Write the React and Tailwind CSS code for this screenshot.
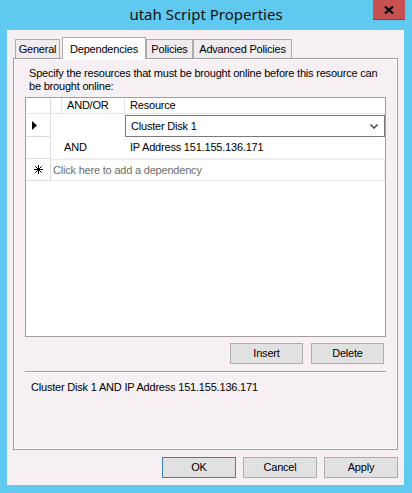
import React from "react";

const Btn = ({ label, primary }) => (
  <div
    className={
      "w-[74px] h-[21px] flex items-center justify-center bg-[#e1e1e1] border " +
      (primary ? "border-[#3c7fb1]" : "border-[#adadad]")
    }
  >
    {label}
  </div>
);

const Tab = ({ label, w, active }) => (
  <div
    className={
      active
        ? "h-[22px] -mb-px bg-white border border-b-0 border-[#acacac] flex items-start pt-[3px] justify-center"
        : "h-[19px] bg-[#f0ebef] border border-b-0 border-[#acacac] flex items-center justify-center"
    }
    style={{ width: w }}
  >
    {label}
  </div>
);

export default function App() {
  return (
    <div className="w-[412px] h-[493px] bg-[#5fc9ef] flex flex-col font-['Liberation_Sans',Arial,sans-serif] text-[11px] tracking-[-0.2px] text-black">
      {/* title bar */}
      <div className="h-[30px] relative flex items-center justify-center tracking-normal">
        <span className="font-['Noto_Sans',sans-serif] text-[15px] text-[#111] -mt-[2px]">
          utah Script Properties
        </span>
        <div className="absolute left-[373px] top-0 w-[32px] h-[20px] bg-[#c75050] border-b border-[#8a3a3a] flex items-center justify-center">
          <svg width="10" height="8" viewBox="0 0 10 8">
            <path d="M1 0.5 L9 7.5 M9 0.5 L1 7.5" stroke="#000" strokeWidth="2.2" />
          </svg>
        </div>
      </div>

      {/* client */}
      <div className="ml-[7px] mr-[8px] mb-[8px] flex-1 bg-[#f6f0f4] px-[6px] pt-[7px] flex flex-col">
        <div className="flex items-end h-[21px] pl-[2px] relative z-10">
          <Tab label="General" w={45} />
          <div className="w-[2px]" />
          <Tab label="Dependencies" w={84} active />
          <Tab label="Policies" w={47} />
          <Tab label="Advanced Policies" w={99} />
        </div>

        <div className="h-[392px] border border-[#a0a0a0] bg-[#f6f0f4] shadow-[inset_1px_1px_0_#fff,inset_-1px_-1px_0_#fff] pt-[8px] px-[11px] flex flex-col">
          <p className="pl-[4px] leading-[13px] whitespace-nowrap">
            Specify the resources that must be brought online before this resource can
            <br />
            be brought online:
          </p>

          <div className="mt-[4px] h-[240px] border border-[#a0a0a0] bg-white flex flex-col">
            {/* header */}
            <div className="flex h-[16px] border-b border-[#e3e3e3]">
              <div className="w-[25px] border-r border-[#d8d8d8]" />
              <div className="w-[11px] border-r border-[#e3e3e3]" />
              <div className="w-[63px] border-r border-[#e3e3e3] pl-[5px] flex items-center">AND/OR</div>
              <div className="flex-1 pl-[5px] flex items-center">Resource</div>
            </div>
            {/* row 1 */}
            <div className="flex h-[23px]">
              <div className="w-[25px] border-r border-b border-[#dcdcdc] flex items-center pl-[6px]">
                <svg width="5" height="9" viewBox="0 0 5 9">
                  <path d="M0 0 L5 4.5 L0 9 Z" fill="#000" />
                </svg>
              </div>
              <div className="w-[74px]" />
              <div className="flex-1 pt-px">
                <div className="h-[22px] border border-[#7a7a7a] flex items-center pl-[5px] pr-[6px] justify-between">
                  <span>Cluster Disk 1</span>
                  <svg width="8" height="5" viewBox="0 0 8 5">
                    <path d="M0.5 0.5 L4 4 L7.5 0.5" stroke="#555" strokeWidth="1.6" fill="none" />
                  </svg>
                </div>
              </div>
            </div>
            {/* row 2 */}
            <div className="flex h-[22px]">
              <div className="w-[25px] border-r border-b border-[#dcdcdc]" />
              <div className="w-[11px]" />
              <div className="w-[63px] border-b border-[#f2f2f2] pl-[2px] flex items-center">AND</div>
              <div className="flex-1 border-b border-[#f2f2f2] pl-[5px] flex items-center">
                IP Address 151.155.136.171
              </div>
            </div>
            {/* row 3 */}
            <div className="flex h-[22px]">
              <div className="w-[25px] border-r border-b border-[#dcdcdc] flex items-center justify-center">
                <svg width="9" height="9" viewBox="0 0 9 9">
                  <path
                    d="M4.5 0 V9 M0 4.5 H9 M1.3 1.3 L7.7 7.7 M7.7 1.3 L1.3 7.7"
                    stroke="#000"
                    strokeWidth="1"
                  />
                </svg>
              </div>
              <div className="flex-1 border border-l-0 border-[#ececec] pl-[2px] flex items-center text-[#6d6d6d]">
                Click here to add a dependency
              </div>
            </div>
            <div className="flex-1" />
          </div>

          <div className="mt-[6px] flex justify-end gap-[8px] pr-[2px]">
            <div className="w-[73px] h-[21px] flex items-center justify-center bg-[#e1e1e1] border border-[#adadad]">Insert</div>
            <div className="w-[73px] h-[21px] flex items-center justify-center bg-[#e1e1e1] border border-[#adadad]">Delete</div>
          </div>

          <div className="mt-[7px] border-t border-b border-t-[#a0a0a0] border-b-white" />
          <p className="mt-[6px] pl-[6px]">Cluster Disk 1 AND IP Address 151.155.136.171</p>
        </div>

        <div className="mt-[7px] flex justify-end gap-[7px]">
          <Btn label="OK" primary />
          <Btn label="Cancel" />
          <Btn label="Apply" />
        </div>
      </div>
    </div>
  );
}
